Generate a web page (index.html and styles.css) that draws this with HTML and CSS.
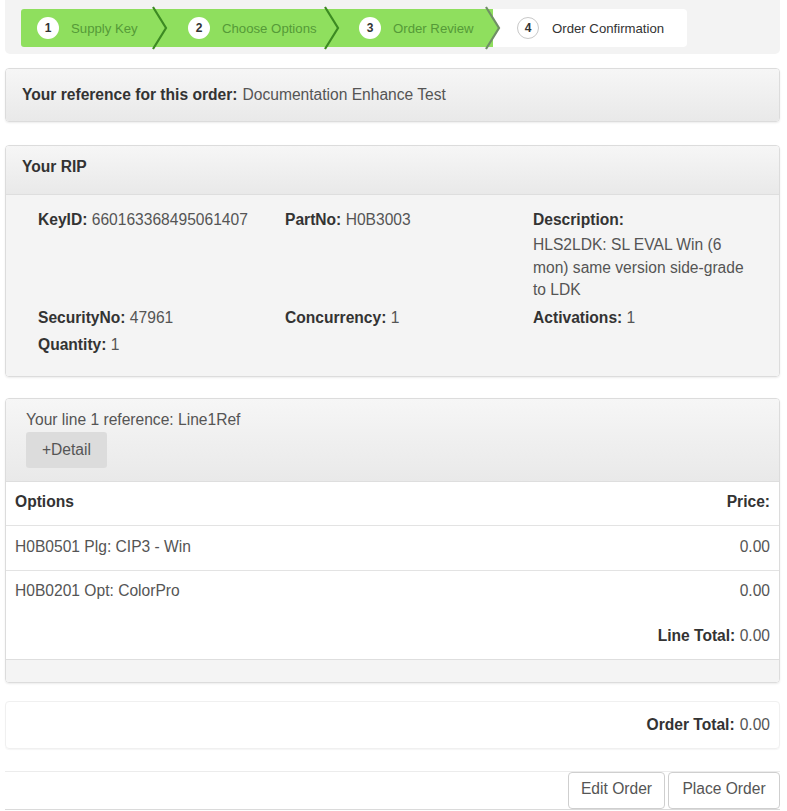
FILE: index.html
```html
<!DOCTYPE html>
<html>
<head>
<meta charset="utf-8">
<link rel="stylesheet" href="styles.css">
</head>
<body>
<div class="page">
  <div class="wizard">
    <div class="steps">
      <div class="step done first">
        <span class="num">1</span><span class="label">Supply Key</span>
        <svg class="chev" width="18" height="44" viewBox="0 0 18 44"><path d="M2 1 L15 22 L2 43" fill="none" stroke="#3c8a22" stroke-width="2.2"/></svg>
      </div>
      <div class="step done">
        <span class="num">2</span><span class="label">Choose Options</span>
        <svg class="chev" width="18" height="44" viewBox="0 0 18 44"><path d="M2 1 L15 22 L2 43" fill="none" stroke="#3c8a22" stroke-width="2.2"/></svg>
      </div>
      <div class="step done">
        <span class="num">3</span><span class="label">Order Review</span>
        <svg class="chev" width="18" height="44" viewBox="0 0 18 44"><path d="M0 3 L2 3 L15 22 L2 41 L0 41 Z" fill="#8fdf5e"/><path d="M2 1 L15 22 L2 43" fill="none" stroke="#6f8f65" stroke-width="2.2"/></svg>
      </div>
      <div class="step current">
        <span class="num">4</span><span class="label">Order Confirmation</span>
      </div>
    </div>
  </div>

  <div class="panel ref-panel">
    <div class="panel-head"><b>Your reference for this order:</b> Documentation Enhance Test</div>
  </div>

  <div class="panel rip-panel">
    <div class="panel-head rip-head"><b>Your RIP</b></div>
    <div class="rip-body">
      <div class="field"><b>KeyID:</b> 660163368495061407</div>
      <div class="field"><b>PartNo:</b> H0B3003</div>
      <div class="field desc"><b>Description:</b><div class="desc-text">HLS2LDK: SL EVAL Win (6 mon) same version side-grade to LDK</div></div>
      <div class="field"><b>SecurityNo:</b> 47961</div>
      <div class="field"><b>Concurrency:</b> 1</div>
      <div class="field"><b>Activations:</b> 1</div>
      <div class="field"><b>Quantity:</b> 1</div>
    </div>
  </div>

  <div class="panel line-panel">
    <div class="panel-head line-head">
      <div class="line-ref">Your line 1 reference: Line1Ref</div>
      <button class="detail-btn">+Detail</button>
    </div>
    <table class="opts">
      <thead>
        <tr><th class="l">Options</th><th class="r">Price:</th></tr>
      </thead>
      <tbody>
        <tr class="row"><td>H0B0501 Plg: CIP3 - Win</td><td class="r">0.00</td></tr>
        <tr class="row last"><td>H0B0201 Opt: ColorPro</td><td class="r">0.00</td></tr>
        <tr class="total"><td></td><td class="r"><b>Line Total:</b> 0.00</td></tr>
      </tbody>
    </table>
    <div class="panel-foot"></div>
  </div>

  <div class="order-total"><b>Order Total:</b> 0.00</div>

  <div class="actions">
    <button class="btn">Edit Order</button>
    <button class="btn">Place Order</button>
  </div>
</div>
</body>
</html>
```

FILE: styles.css
```css
* { box-sizing: border-box; }
html, body { margin: 0; padding: 0; background: #fff; }
body {
  font-family: "Liberation Sans", Arial, sans-serif;
  font-size: 15.6px;
  color: #555;
}
b { color: #333; font-weight: bold; }
.page { padding: 0 7px 0 5px; }

.wizard {
  background: #f3f3f3;
  border-radius: 0 0 5px 5px;
  padding: 9px 16px 7px 16px;
  height: 54px;
}
.steps { display: flex; height: 38px; }
.step {
  position: relative;
  display: flex;
  align-items: center;
  height: 38px;
  background: #8fdf5e;
  font-size: 13.2px;
}
.step.first { border-radius: 3px 0 0 3px; padding-left: 16px; width: 139px; }
.step:nth-child(2) { padding-left: 28px; width: 172px; }
.step:nth-child(3) { padding-left: 27px; width: 161px; }
.step.current {
  background: #fff;
  padding-left: 24px;
  width: 194px;
  border-radius: 0 4px 4px 0;
}
.num {
  width: 22px; height: 22px;
  border-radius: 50%;
  background: #fff;
  color: #333;
  font-weight: bold;
  font-size: 12px;
  display: flex; align-items: center; justify-content: center;
  flex: none;
}
.step.current .num { border: 1px solid #c8c8c8; }
.label { margin-left: 12px; color: #559a38; }
.step.current .label { color: #333; margin-left: 13px; }
.chev {
  position: absolute;
  right: -9px;
  top: -3px;
  z-index: 2;
}

.panel {
  border: 1px solid #dcdcdc;
  border-radius: 4px;
  box-shadow: 0 1px 2px rgba(0,0,0,0.08);
  overflow: hidden;
}
.panel-head {
  background: linear-gradient(#f6f6f6, #e9e9e9);
  padding: 0 16px;
}
.ref-panel { margin-top: 14px; }
.ref-panel .panel-head { height: 52px; display: flex; align-items: center; }
.ref-panel .panel-head b { margin-right: 5px; }

.rip-panel { margin-top: 23px; }
.rip-head { height: 49px; padding-top: 12px; border-bottom: 1px solid #dedede; }
.rip-body {
  background: #f4f4f4;
  padding: 14px 0 15px 32px;
  display: grid;
  grid-template-columns: 247px 248px 222px;
  line-height: 22px;
}
.field { margin-bottom: 5px; }
.desc-text { margin-top: 3px; line-height: 22.5px; }

.line-panel { margin-top: 21px; }
.line-head { height: 83px; padding: 11px 20px 0 20px; border-bottom: 1px solid #dedede; }
.line-ref { line-height: 20px; }
.detail-btn {
  margin-top: 2px;
  height: 36px;
  width: 81px;
  border: none;
  border-radius: 3px;
  background: #dcdcdc;
  color: #555;
  font-family: inherit;
  font-size: 15.6px;
  padding: 0;
}
.opts { width: 100%; border-collapse: collapse; background: #fff; }
.opts th, .opts td { padding: 0 9px; height: 44px; }
.opts th { text-align: left; color: #333; border-bottom: 1px solid #e3e3e3; padding-bottom: 3px; }
.opts .r { text-align: right; }
.opts .row td { border-bottom: 1px solid #e3e3e3; height: 45px; padding-bottom: 2px; }
.opts .row.last td { border-bottom: none; height: 42px; }
.opts .total td { height: 46px; }
.panel-foot { height: 23px; background: #f4f4f4; border-top: 1px solid #dedede; }

.order-total {
  margin-top: 18px;
  height: 48px;
  border: 1px solid #f0f0f0;
  border-radius: 4px;
  box-shadow: 0 1px 1px rgba(0,0,0,0.04);
  display: flex; align-items: center; justify-content: flex-end;
  padding-right: 9px;
}
.order-total b { margin-right: 5px; }

.actions {
  margin-top: 22px;
  border-top: 1px solid #ececec;
  border-bottom: 1px solid #dadada;
  display: flex;
  justify-content: flex-end;
  gap: 3px;
}
.btn {
  height: 37px;
  background: #fff;
  border: 1px solid #cfcfcf;
  border-radius: 4px;
  color: #555;
  font-family: inherit;
  font-size: 15.6px;
  padding: 0 0 2px 0;
}
.btn:first-child { width: 97px; }
.btn:last-child { width: 112px; }
```
